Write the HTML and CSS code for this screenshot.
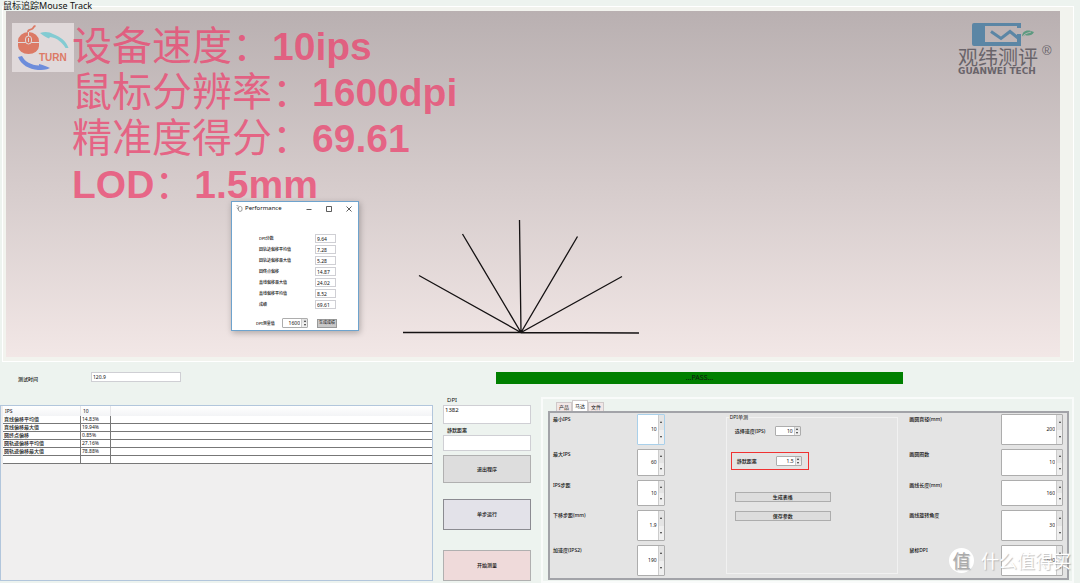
FILE: index.html
```html
<!DOCTYPE html>
<html lang="zh-CN">
<head>
<meta charset="utf-8">
<title>鼠标追踪 Mouse Track</title>
<link rel="stylesheet" href="styles.css">
</head>
<body>
<div class="app">
  <h1 class="app-title">鼠标追踪Mouse Track</h1>
  <section class="frame">
    <div class="stage">
      <svg class="tracks" viewBox="0 0 1054 346" preserveAspectRatio="xMidYMax meet" fill="none" stroke="#151213" stroke-width="1.3" aria-hidden="true">
        <path d="M397 321.5 515 321.5 633 322M413 264.500 515 321.500 616 265.500M456.500 223 515 321.500 571.500 225.500M513.500 209 515 321.500"/>
      </svg>
      <div class="turn-logo">
        <svg viewBox="0 0 62 49" role="img" aria-label="TURN">
          <path d="M6 18a10.500 9 0 0 1 21 0v5a10.500 8 0 0 1-21 0z" fill="#dc7a65"/>
          <path d="M6 19.500h21M16.500 9v11" stroke="#e0d9da" stroke-width="1"/>
          <rect x="13.500" y="13" width="6" height="8" rx="3" fill="#dc7a65" stroke="#e0d9da"/>
          <path d="M16.500 15v4" stroke="#e0d9da"/>
          <path d="M16 9c0-3 2-2 4-3s1-3 3.500-3" fill="none" stroke="#dc7a65" stroke-width="1.800"/>
          <path d="M28 10c5-2 10-1 13 1 8 3 13 7 15.500 14h-3C50 19 45 15 38 14l-1 1.500c-3-1-6-3-9-5.500z" fill="#83cbd2"/>
          <path d="M6 34l4-1c3 6 9 9 17 9.500V41c4 1 7 2 11 4-4 2-8 2-12 2C17 46 9 42 6 34z" fill="#6d8ddb"/>
          <text x="27" y="38" class="turn-word">TURN</text>
        </svg>
      </div>
      <div class="headline">
        <p>设备速度：<b>10ips</b></p>
        <p>鼠标分辨率：<b>1600dpi</b></p>
        <p>精准度得分：<b>69.61</b></p>
        <p><b>LOD</b>：<b>1.5mm</b></p>
      </div>
      <div class="brand">
        <svg class="brand-mark" viewBox="0 0 64 23" aria-hidden="true">
          <path d="M2 0h47v5h-4V3H13v16h32v-8h4v12H2a2 2 0 0 1-2-2V2a2 2 0 0 1 2-2z" fill="#5b86a5"/>
          <path d="M19 8.500l10 7 9-7 8 6.500" fill="none" stroke="#5b86a5" stroke-width="3"/>
          <path d="M50 14c0-7 6-8 12-5-2 4-6 4-9 3z" fill="#5d9a80"/>
          <path d="M50 14c2-3 5-4 9-5" fill="none" stroke="#c1babb" stroke-width=".8"/>
        </svg>
        <div class="brand-name"><span>观纬测评</span><span class="reg">®</span></div>
        <div class="brand-sub">GUANWEI TECH</div>
      </div>

      <section class="dialog" aria-label="Performance">
        <header class="dialog-bar">
          <svg class="dialog-icon" viewBox="0 0 7 7" fill="none" stroke="#777" stroke-width=".7" aria-hidden="true"><path d="M.5.5l2 .5M1 2.500l1 2M2.500 2l2-.5 1.500 1v3l-2 1-1.500-1z"/></svg>
          <span>Performance</span>
          <button type="button" aria-label="最小化"><svg viewBox="0 0 6 6"><path d="M.5 3.500h5"/></svg></button>
          <button type="button" aria-label="最大化"><svg viewBox="0 0 6 6"><path d="M.5.5h5v5h-5z"/></svg></button>
          <button type="button" aria-label="关闭"><svg viewBox="0 0 6 6"><path d="M.5.5l5 5M5.500.5l-5 5"/></svg></button>
        </header>
        <div class="scores">
          <label for="s1">DPI分数</label><input id="s1" value="9.64">
          <label for="s2">圆轨迹偏移平均值</label><input id="s2" value="7.28">
          <label for="s3">圆轨迹偏移最大值</label><input id="s3" value="5.28">
          <label for="s4">圆终点偏移</label><input id="s4" value="14.87">
          <label for="s5">直线偏移最大值</label><input id="s5" value="24.02">
          <label for="s6">直线偏移平均值</label><input id="s6" value="8.52">
          <label for="s7">成绩</label><input id="s7" value="69.61">
        </div>
        <div class="dialog-foot">
          <label for="dpi-measured">DPI测量值</label>
          <span class="spin small"><input id="dpi-measured" type="number" value="1600"><span class="arrows"><button type="button" aria-label="增加"></button><button type="button" aria-label="减少"></button></span></span>
          <button type="button" class="make-score">生成成绩</button>
        </div>
      </section>
    </div>
  </section>

  <div class="status">
    <label for="time">测试时间</label>
    <input id="time" value="120.9">
    <div class="pass" role="status">...PASS...</div>
  </div>

  <main class="lower">
    <div class="results">
      <table>
        <thead><tr><th class="c-name">IPS</th><th class="c-val">10</th><th></th></tr></thead>
        <tbody>
          <tr><td>直线偏移平均值</td><td>14.83%</td><td></td></tr>
          <tr><td>直线偏移最大值</td><td>19.94%</td><td></td></tr>
          <tr><td>圆终点偏移</td><td>0.85%</td><td></td></tr>
          <tr><td>圆轨迹偏移平均值</td><td>27.16%</td><td></td></tr>
          <tr><td>圆轨迹偏移最大值</td><td>78.88%</td><td></td></tr>
          <tr><td></td><td></td><td></td></tr>
        </tbody>
      </table>
    </div>

    <div class="actions">
      <label for="dpi">DPI</label>
      <input id="dpi" class="dpi" value="1382">
      <label for="silent">静默距离</label>
      <input id="silent" class="silent" value="">
      <button type="button" class="quit">退出程序</button>
      <button type="button" class="step">单步运行</button>
      <button type="button" class="start">开始测量</button>
    </div>

    <section class="settings">
      <div class="tabs" role="tablist">
        <button type="button" role="tab">产品</button>
        <button type="button" role="tab" aria-selected="true" class="active">马达</button>
        <button type="button" role="tab">文件</button>
      </div>
      <div class="panel" role="tabpanel">
        <div class="params left">
          <label for="p1">最小IPS</label>
          <span class="spin focus"><input id="p1" type="number" value="10"><span class="arrows"><button type="button" aria-label="增加"></button><button type="button" aria-label="减少"></button></span></span>
          <label for="p2">最大IPS</label>
          <span class="spin"><input id="p2" type="number" value="60"><span class="arrows"><button type="button" aria-label="增加"></button><button type="button" aria-label="减少"></button></span></span>
          <label for="p3">IPS步距</label>
          <span class="spin"><input id="p3" type="number" value="10"><span class="arrows"><button type="button" aria-label="增加"></button><button type="button" aria-label="减少"></button></span></span>
          <label for="p4">下移步距(mm)</label>
          <span class="spin"><input id="p4" type="number" step="0.1" value="1.9"><span class="arrows"><button type="button" aria-label="增加"></button><button type="button" aria-label="减少"></button></span></span>
          <label for="p5">加速度(IPS2)</label>
          <span class="spin"><input id="p5" type="number" value="190"><span class="arrows"><button type="button" aria-label="增加"></button><button type="button" aria-label="减少"></button></span></span>
        </div>
        <fieldset class="single">
          <legend>DPI单测</legend>
          <div class="single-row">
            <label for="speed">选择速度(IPS)</label>
            <span class="spin small"><input id="speed" type="number" value="10"><span class="arrows"><button type="button" aria-label="增加"></button><button type="button" aria-label="减少"></button></span></span>
          </div>
          <div class="single-row marked">
            <label for="quiet">静默距离</label>
            <span class="spin small"><input id="quiet" type="number" step="0.1" value="1.5"><span class="arrows"><button type="button" aria-label="增加"></button><button type="button" aria-label="减少"></button></span></span>
          </div>
          <button type="button" class="wide">生成表格</button>
          <button type="button" class="wide">保存参数</button>
        </fieldset>
        <div class="params right">
          <label for="q1">画圆直径(mm)</label>
          <span class="spin"><input id="q1" type="number" value="200"><span class="arrows"><button type="button" aria-label="增加"></button><button type="button" aria-label="减少"></button></span></span>
          <label for="q2">画圆圈数</label>
          <span class="spin"><input id="q2" type="number" value="10"><span class="arrows"><button type="button" aria-label="增加"></button><button type="button" aria-label="减少"></button></span></span>
          <label for="q3">画线长度(mm)</label>
          <span class="spin"><input id="q3" type="number" value="160"><span class="arrows"><button type="button" aria-label="增加"></button><button type="button" aria-label="减少"></button></span></span>
          <label for="q4">画线旋转角度</label>
          <span class="spin"><input id="q4" type="number" value="30"><span class="arrows"><button type="button" aria-label="增加"></button><button type="button" aria-label="减少"></button></span></span>
          <label for="q5">鼠标DPI</label>
          <span class="spin"><input id="q5" type="number" value="1600"><span class="arrows"><button type="button" aria-label="增加"></button><button type="button" aria-label="减少"></button></span></span>
        </div>
      </div>
    </section>
  </main>
  <div class="watermark" aria-hidden="true"><span class="seal">值</span>什么值得买</div>
</div>
</body>
</html>
```
FILE: styles.css
```css
* { box-sizing: border-box; }

body {
  margin: 0;
  background: #edf3ef;
  color: #111;
  font: 5px/7px "Noto Sans", "Noto Sans CJK SC", sans-serif;
}

button, input {
  margin: 0;
  padding: 0;
  border: 0;
  border-radius: 0;
  color: inherit;
  font: inherit;
  min-width: 0;
}

input {
  background: #fff;
  border: 1px solid #cfcfd4;
  padding: 0 1px;
}

label, .actions button, .wide, td:first-child { font-weight: 500; }

input[type="number"] { appearance: textfield; -moz-appearance: textfield; }
input::-webkit-inner-spin-button { appearance: none; margin: 0; }

.app {
  position: relative;
  display: flex;
  flex-direction: column;
  min-height: 100vh;
  overflow: hidden;
}

.app-title {
  align-self: flex-start;
  z-index: 1;
  margin: 0 0 -5px 3px;
  font-size: 9px;
  line-height: 11px;
  font-weight: 400;
  background: #edf3ef;
}

.frame {
  display: flex;
  flex: 1;
  margin: 0 6px 0 2px;
  padding: 4px 13px 4px 3px;
  border: 1px solid #fff;
  background: #f2f3ee;
}

.stage {
  position: relative;
  display: flex;
  align-items: flex-start;
  flex: 1;
  padding: 12px 6px;
  background: linear-gradient(#b9b0b1, #f2e7e6);
}

.tracks { position: absolute; inset: 0; width: 100%; height: 100%; }

.turn-logo { width: 62px; height: 49px; background: #e0d9da; }
.turn-logo svg { display: block; }
.turn-word { font: 900 10px "Liberation Sans", sans-serif; fill: #dc7a65; }

.headline {
  margin: -3px auto 0 -2px;
  color: #ee3f6cb8;
  font: 400 40px/46px "Noto Sans CJK SC", sans-serif;
  z-index: 1;
}
.headline p { margin: 0; height: 46px; }
.headline b { font: 700 39px/1 "Liberation Sans", sans-serif; }

.brand { color: #69646a; white-space: nowrap; width: 96px; }
.brand-mark { display: block; width: 64px; height: 23px; margin-left: 14px; }
.brand-name { display: flex; gap: 4px; font: 20px/22px "Noto Sans CJK SC", sans-serif; }
.reg { font: 13px/10px "Liberation Sans", sans-serif; }
.brand-sub { font: 700 9px/6px "DejaVu Sans", sans-serif; }

.dialog {
  position: absolute;
  z-index: 2;
  left: 225px;
  top: 190px;
  width: 128px;
  background: #fff;
  border: 1px solid #6ea3cd;
  box-shadow: 1px 2px 6px #0004;
  padding-bottom: 2px;
}
.dialog-bar {
  display: flex;
  align-items: center;
  height: 13px;
  padding-left: 4px;
  font-size: 6px;
  gap: 2px;
}
.dialog-bar span { margin-right: auto; }
.dialog-icon { width: 7px; height: 7px; }
.dialog-bar button { width: 18px; height: 11px; background: none; display: grid; place-items: center; }
.dialog-bar button svg { width: 6px; height: 6px; fill: none; stroke: #333; stroke-width: .8; }

.scores {
  display: grid;
  grid-template-columns: 56px 21px;
  row-gap: 2px;
  align-items: center;
  padding: 19px 0 9px 27px;
}
.scores label { font-size: 4px; }
.scores input { height: 9px; }

.dialog-foot { display: flex; align-items: center; padding-left: 24px; }
.dialog-foot label { width: 26px; font-size: 4px; }
.make-score { width: 20px; height: 9px; margin-left: 9px; background: #c8c8c8; border: 1px solid #999; font-size: 4px; line-height: 6px; }

.spin { display: flex; background: #fff; border: 1px solid #adadad; border-radius: 1px; }
.spin input { flex: 1; width: 0; border: 0; background: none; text-align: right; }
.arrows { display: flex; flex-direction: column; width: 6px; border-left: 1px solid #ccc; }
.arrows button { flex: 1; background: #efefef; display: grid; place-items: center; }
.arrows button:first-child { background: #e4e4e4; }
.arrows button::before { content: ""; border: solid transparent; border-width: 0 1px 2px; border-bottom-color: #333; }
.arrows button:last-child::before { border-width: 2px 1px 0; border-top-color: #333; }
.spin.small { width: 26px; height: 10px; }
.spin.focus { border-color: #a9d0ea; }

.status {
  display: flex;
  align-items: flex-start;
  padding: 10px 177px 13px 18px;
}
.status label { width: 73px; padding-top: 4px; }
.status input { width: 90px; height: 10px; margin-right: auto; }
.pass { width: 46%; height: 12px; background: #008000; text-align: center; font-size: 7px; line-height: 12px; }

.lower {
  display: grid;
  grid-template-columns: 433fr 88fr 533fr;
  column-gap: 10px;
  padding-right: 6px;
}

.results {
  margin: 8px 0 2px;
  border: 1px solid #b2c6dc;
  background: #f0efef;
  padding-left: 2px;
}
.results table { width: 100%; border-collapse: separate; border-spacing: 0; table-layout: fixed; }
.results th { height: 10px; padding: 0 2px; background: linear-gradient(#fff, #f3f4f6); border-right: 1px solid #e5e5e8; text-align: left; font-weight: 400; }
.results td { height: 8px; padding: 0 1px; background: #fff; border: solid #777; border-width: 0 1px 1px 0; }
.results tr > :last-child { border-right: 0; }
.c-name { width: 78px; }
.c-val { width: 30px; }

.actions { display: flex; flex-direction: column; padding-bottom: 2px; }
.actions label { padding-left: 4px; margin-bottom: 1px; }
.actions label[for="dpi"] { font-size: 6px; font-weight: 400; }
.actions input { width: 100%; }
.actions .dpi { height: 19px; margin-bottom: 3px; padding-bottom: 9px; font-size: 6px; }
.actions .silent { height: 16px; margin-bottom: 4px; }
.actions button { border: 1px solid #b0b0b0; }
.actions .quit { height: 28px; background: #ddd; margin-bottom: 16px; }
.actions .step { height: 31px; background: #e3e2e9; border-color: #8b8b91; margin-bottom: 20px; }
.actions .start { height: 31px; background: #efdada; }

.settings {
  display: flex;
  flex-direction: column;
  border: 2px solid #f9fbfa;
  padding: 1px 3px 1px 5px;
}
.tabs { display: flex; align-items: flex-end; padding-left: 8px; height: 11px; }
.tabs button { width: 16px; height: 9px; background: #f1e7e7; border: 1px solid #cfc9c9; border-bottom: 0; }
.tabs .active { height: 11px; background: #fff; }

.panel {
  display: grid;
  flex: 1;
  grid-template-columns: 174fr 185fr 155fr;
  border: 2px solid #a2a3a8;
  background: #e4e4e4;
  padding: 1px 4px 1px 3px;
}
.params { display: grid; grid-template-rows: 35px 31px 30px 35px 31px; align-content: start; }
.params label { padding-top: 2px; }
.params.left { grid-template-columns: 1fr 28px; padding-right: 61px; }
.params.right { grid-template-columns: 1fr 62px; }
.params .spin { margin-bottom: 4px; }
.params .spin:last-child { margin-bottom: 0; }

.single { min-width: 0; margin: 0 11px 3px 0; padding: 5px 8px; border: 1px solid #f1f1f1; }
.single legend { padding: 0 1px; margin-left: -6px; }
.single-row { display: flex; align-items: center; gap: 1px; }
.single-row label { width: 39px; }
.marked { width: 78px; height: 18px; margin: 16px 0 22px -4px; padding-left: 4px; border: 1px solid #f03232; }
.marked label { padding-left: 1px; }
.wide { display: block; width: 96px; max-width: 100%; height: 10px; margin-bottom: 9px; background: #ddd; border: 1px solid #adadad; }

.watermark {
  position: absolute;
  right: 9px;
  bottom: 10px;
  display: flex;
  align-items: center;
  gap: 7px;
  color: #fff;
  font: 18px/26px "Noto Sans CJK SC", sans-serif;
  text-shadow: 1px 1px 1px #8888;
  pointer-events: none;
}
.seal { width: 25px; height: 25px; border-radius: 50%; background: #fff; color: #aaa; line-height: 24px; text-align: center; }
```
